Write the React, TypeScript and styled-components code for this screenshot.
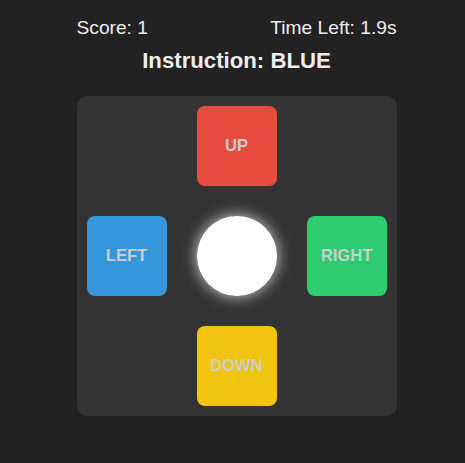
import React from "react";
import styled, { createGlobalStyle } from "styled-components";

const GlobalStyle = createGlobalStyle`
  body {
    margin: 0;
    background: #222222;
    font-family: "Liberation Sans", Arial, sans-serif;
    color: #eeeeee;
  }
`;

const Page = styled.div`
  display: flex;
  flex-direction: column;
  align-items: center;
  padding: 17px 0 0 8px;
`;

const Header = styled.div`
  display: flex;
  justify-content: space-between;
  width: 320px;
  font-size: 19.2px;
  line-height: 22px;
`;

const Instruction = styled.h2`
  margin: 9px 0 22px;
  font-size: 22.2px;
  line-height: 26px;
  font-weight: bold;
`;

const Board = styled.div`
  display: grid;
  grid-template-columns: repeat(3, 80px);
  grid-template-rows: repeat(3, 80px);
  gap: 30px;
  padding: 10px;
  background: #333333;
  border-radius: 10px;
`;

const Pad = styled.div<{ $color: string; $col: number; $row: number }>`
  grid-column: ${(p) => p.$col};
  grid-row: ${(p) => p.$row};
  display: flex;
  align-items: center;
  justify-content: center;
  background: ${(p) => p.$color};
  border-radius: 8px;
  color: #cccccc;
  font-size: 16.6px;
  font-weight: bold;
`;

const Ball = styled.div`
  grid-column: 2;
  grid-row: 2;
  border-radius: 50%;
  background: #ffffff;
  box-shadow: 0 0 15px rgba(255, 255, 255, 0.8);
`;

const pads = [
  { label: "UP", color: "#e74c3c", col: 2, row: 1 },
  { label: "LEFT", color: "#3498db", col: 1, row: 2 },
  { label: "RIGHT", color: "#2ecc71", col: 3, row: 2 },
  { label: "DOWN", color: "#f1c40f", col: 2, row: 3 },
];

export default function App() {
  return (
    <>
      <GlobalStyle />
      <Page>
        <Header>
          <span>Score: 1</span>
          <span>Time Left: 1.9s</span>
        </Header>
        <Instruction>Instruction: BLUE</Instruction>
        <Board>
          {pads.map((p) => (
            <Pad key={p.label} $color={p.color} $col={p.col} $row={p.row}>
              {p.label}
            </Pad>
          ))}
          <Ball />
        </Board>
      </Page>
    </>
  );
}
